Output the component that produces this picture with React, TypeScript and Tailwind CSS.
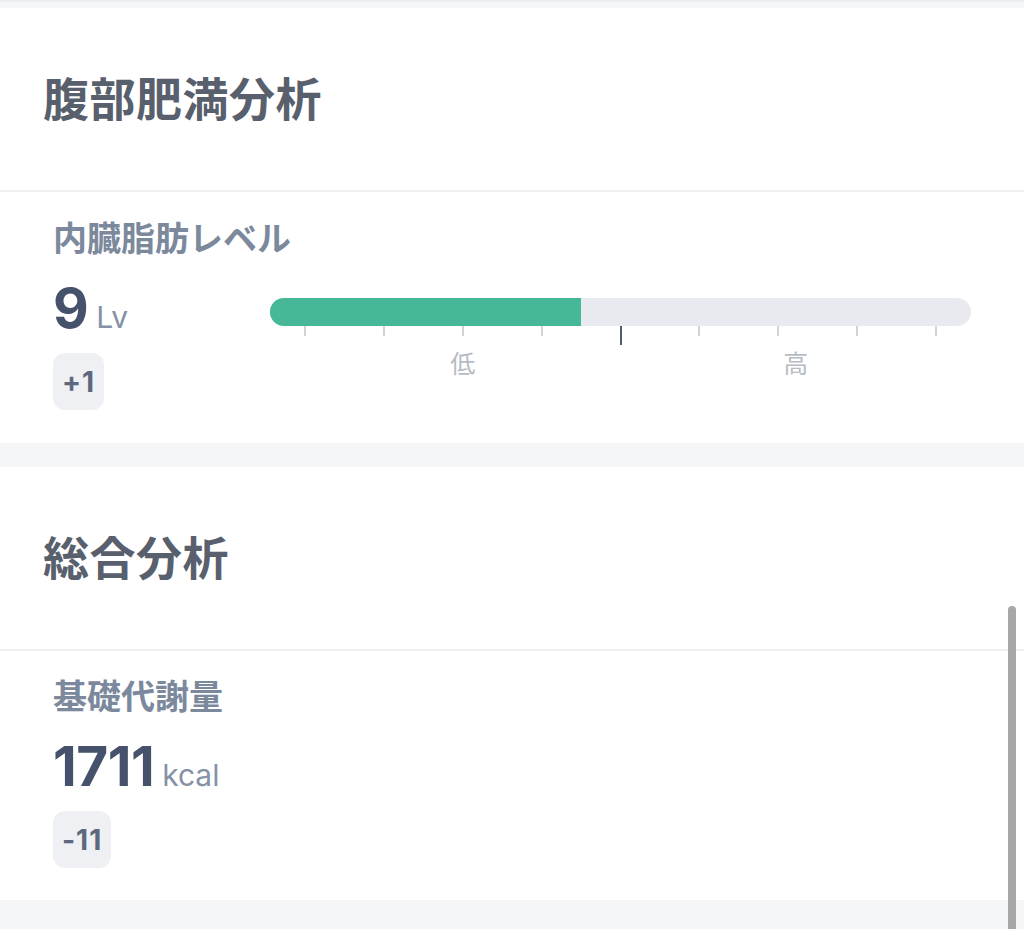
const font = "font-['Inter','Noto_Sans_CJK_JP',sans-serif]";

const Heading = ({ title }: { title: string }) => (
  <div className="h-[184px] flex items-center px-[43px] bg-white border-b-2 border-[#eef0f3]">
    <h2 className="text-[46px] leading-[56px] font-bold text-[#59606d] tracking-[0.5px]">
      {title}
    </h2>
  </div>
);

const Badge = ({ text }: { text: string }) => (
  <div className="inline-flex h-[57px] items-center justify-center rounded-[12px] bg-[#eef0f4] px-[9px] text-[28px] font-bold text-[#5d687c] tracking-[1px]">
    {text}
  </div>
);

const Value = ({ num, unit }: { num: string; unit: string }) => (
  <div className="flex items-baseline gap-[8px] h-[54px]">
    <span className="text-[55px] leading-[54px] font-bold text-[#46526b] tracking-[-0.5px]">
      {num}
    </span>
    <span className="text-[30px] leading-[54px] text-[#8592a6]">{unit}</span>
  </div>
);

const LevelBar = () => {
  const ticks = [0, 1, 2, 3, 4, 5, 6, 7, 8];
  return (
    <div className="pt-[17px]">
      <div className="h-[28px] rounded-full bg-[#e9eaef] overflow-hidden">
        <div className="h-full w-[44.4%] bg-[#47b897]" />
      </div>
      <div className="flex justify-between items-start px-[34px] h-[19px]">
        {ticks.map((i) =>
          i === 4 ? (
            <div key={i} className="w-[2px] h-[19px] bg-[#4f5b73]" />
          ) : (
            <div key={i} className="w-[2px] h-[10px] bg-[#d0d3d9]" />
          )
        )}
      </div>
      <div className="relative h-[32px] mt-[3px] text-[25px] leading-[32px] text-[#b7bbc5]">
        <span className="absolute left-[27.5%] -translate-x-1/2">低</span>
        <span className="absolute left-[75%] -translate-x-1/2">高</span>
      </div>
    </div>
  );
};

export default function App() {
  return (
    <div className={`relative min-h-[929px] overflow-hidden bg-[#f5f6f8] ${font}`}>
      <div className="h-[8px] border-t-2 border-[#eceef1] bg-[#f5f6f8]" />

      {/* 腹部肥満分析 */}
      <Heading title="腹部肥満分析" />
      <div className="bg-white px-[53px] pt-[23px] pb-[33px]">
        <p className="text-[34px] leading-[48px] font-semibold text-[#7c899d]">内臓脂肪レベル</p>
        <div className="flex mt-[18px]">
          <div className="w-[217px]">
            <Value num="9" unit="Lv" />
            <div className="mt-[18px]">
              <Badge text="+1" />
            </div>
          </div>
          <div className="flex-1">
            <LevelBar />
          </div>
        </div>
      </div>

      <div className="h-[24px] bg-[#f5f6f8]" />

      {/* 総合分析 */}
      <Heading title="総合分析" />
      <div className="bg-white px-[53px] pt-[22px] pb-[32px]">
        <p className="text-[34px] leading-[48px] font-semibold text-[#7c899d]">基礎代謝量</p>
        <div className="mt-[18px]">
          <Value num="1711" unit="kcal" />
          <div className="mt-[18px]">
            <Badge text="-11" />
          </div>
        </div>
      </div>

      {/* scrollbar */}
      <div className="absolute right-[8px] top-[606px] bottom-0 w-[8px] rounded-t-full bg-[#a7a7a7]" />
    </div>
  );
}
